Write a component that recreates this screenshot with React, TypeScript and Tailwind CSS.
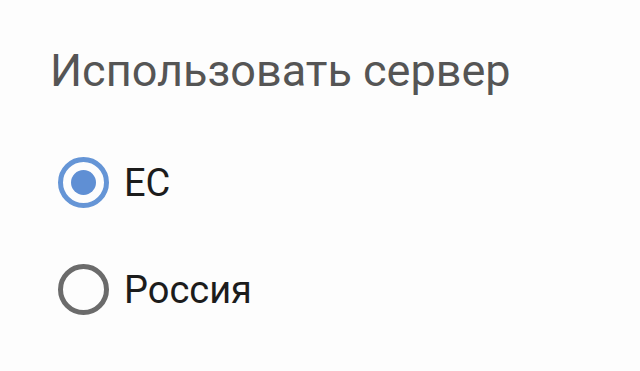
import React, { useState } from "react";

export default function App() {
  const [server, setServer] = useState("eu");
  const options = [
    { id: "eu", label: "ЕС" },
    { id: "ru", label: "Россия" },
  ];

  return (
    <main
      className="w-[640px] h-[371px] bg-[#fdfdfd] pl-[50px] pt-[45px]"
      style={{ fontFamily: "Roboto, 'Noto Sans', sans-serif" }}
    >
      <h1 className="text-[45px] leading-[52px] text-[#555555] font-normal">Использовать сервер</h1>
      <div className="mt-[60px] ml-[8px] flex flex-col gap-[56px]">
        {options.map(({ id, label }) => {
          const checked = server === id;
          return (
            <label key={id} className="flex items-center gap-[15px] cursor-pointer" onClick={() => setServer(id)}>
              <span
                className={`w-[51px] h-[51px] rounded-full border-[5px] flex items-center justify-center ${
                  checked ? "border-[#6595d6]" : "border-[#6b6b6b]"
                }`}
              >
                {checked && <span className="w-[25px] h-[25px] rounded-full bg-[#5f8fd4]" />}
              </span>
              <span className="text-[38px] leading-[50px] text-[#1c1c1c]">{label}</span>
            </label>
          );
        })}
      </div>
    </main>
  );
}
